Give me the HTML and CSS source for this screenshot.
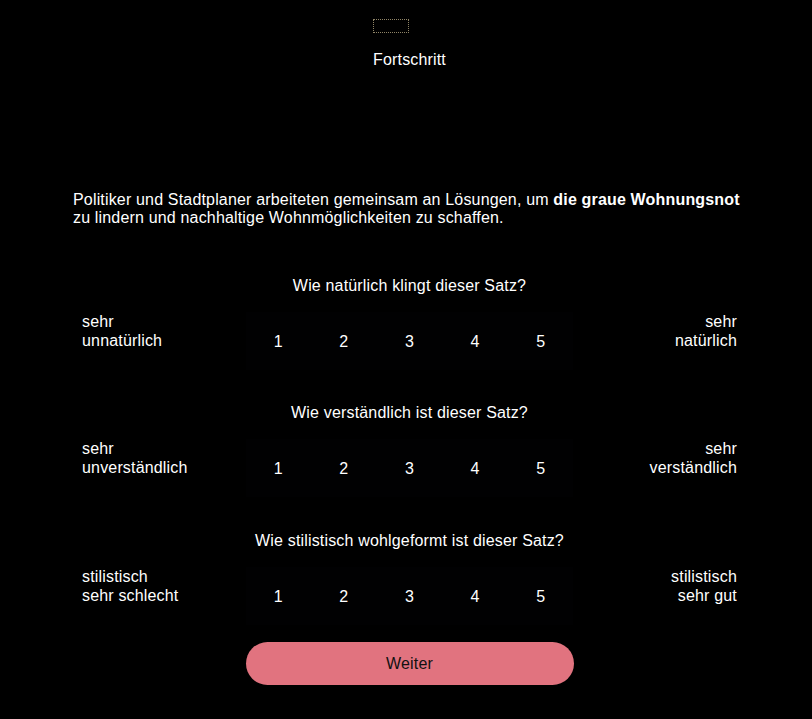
FILE: index.html
```html
<!DOCTYPE html>
<html lang="de">
<head>
<meta charset="utf-8">
<title>Umfrage</title>
<link rel="stylesheet" href="styles.css">
</head>
<body>
<main class="page">
  <header class="progress-head">
    <div class="progress-wrap">
      <div class="progress-bar" role="progressbar" aria-label="Fortschritt"></div>
      <div class="progress-label">Fortschritt</div>
    </div>
  </header>

  <p class="sentence">Politiker und Stadtplaner arbeiteten gemeinsam an Lösungen, um <strong>die graue Wohnungsnot</strong> zu lindern und nachhaltige Wohnmöglichkeiten zu schaffen.</p>

  <section class="question">
    <h2 class="q-title">Wie natürlich klingt dieser Satz?</h2>
    <div class="scale">
      <div class="end end-left">sehr<br>unnatürlich</div>
      <div class="options"><span class="opt">1</span><span class="opt">2</span><span class="opt">3</span><span class="opt">4</span><span class="opt">5</span></div>
      <div class="end end-right">sehr<br>natürlich</div>
    </div>
  </section>

  <section class="question">
    <h2 class="q-title">Wie verständlich ist dieser Satz?</h2>
    <div class="scale">
      <div class="end end-left">sehr<br>unverständlich</div>
      <div class="options"><span class="opt">1</span><span class="opt">2</span><span class="opt">3</span><span class="opt">4</span><span class="opt">5</span></div>
      <div class="end end-right">sehr<br>verständlich</div>
    </div>
  </section>

  <section class="question question-last">
    <h2 class="q-title">Wie stilistisch wohlgeformt ist dieser Satz?</h2>
    <div class="scale">
      <div class="end end-left">stilistisch<br>sehr schlecht</div>
      <div class="options"><span class="opt">1</span><span class="opt">2</span><span class="opt">3</span><span class="opt">4</span><span class="opt">5</span></div>
      <div class="end end-right">stilistisch<br>sehr gut</div>
    </div>
  </section>

  <div class="actions">
    <button class="next" type="button">Weiter</button>
  </div>
</main>
</body>
</html>
```

FILE: styles.css
```css
html, body {
  margin: 0;
  background: #000;
}
body {
  padding: 0 0 0 7px;
  color: #fff;
  font-family: "Liberation Sans", Arial, sans-serif;
  font-size: 16px;
  letter-spacing: 0.17px;
}
.page {
  max-width: 673px;
  margin: 0 auto;
  padding-top: 19px;
}
.progress-head {
  display: flex;
  justify-content: center;
}
.progress-wrap {
  display: flex;
  flex-direction: column;
  align-items: flex-start;
}
.progress-bar {
  width: 36px;
  height: 14px;
  box-sizing: border-box;
  border: 1px dotted #8f8466;
}
.progress-label {
  margin-top: 18px;
  line-height: 18px;
}
.sentence {
  margin: 122px 0 0;
  line-height: 18px;
}
.sentence strong {
  font-weight: 700;
}
.question {
  margin-top: 34px;
}
.sentence + .question {
  margin-top: 50px;
}
.question-last {
  margin-top: 35px;
}
.q-title {
  margin: 0;
  font-size: 16px;
  font-weight: 400;
  line-height: 18px;
  text-align: center;
}
.scale {
  display: grid;
  grid-template-columns: 1fr 328px 1fr;
  align-items: start;
  padding: 0 9px;
  margin-top: 17px;
}
.end {
  line-height: 19px;
}
.end-right {
  text-align: right;
}
.options {
  display: grid;
  grid-template-columns: repeat(5, 1fr);
  height: 58px;
}
.opt {
  display: flex;
  align-items: center;
  justify-content: center;
  padding-top: 2px;
  background: #010102;
}
.actions {
  display: grid;
  grid-template-columns: 1fr 328px 1fr;
  padding: 0 9px;
  margin-top: 17px;
}
.next {
  grid-column: 2;
  height: 43px;
  border: none;
  border-radius: 22px;
  background: #e1737f;
  color: #111;
  font-family: "Liberation Sans", Arial, sans-serif;
  font-size: 16px;
  letter-spacing: 0.17px;
  cursor: pointer;
}
```
